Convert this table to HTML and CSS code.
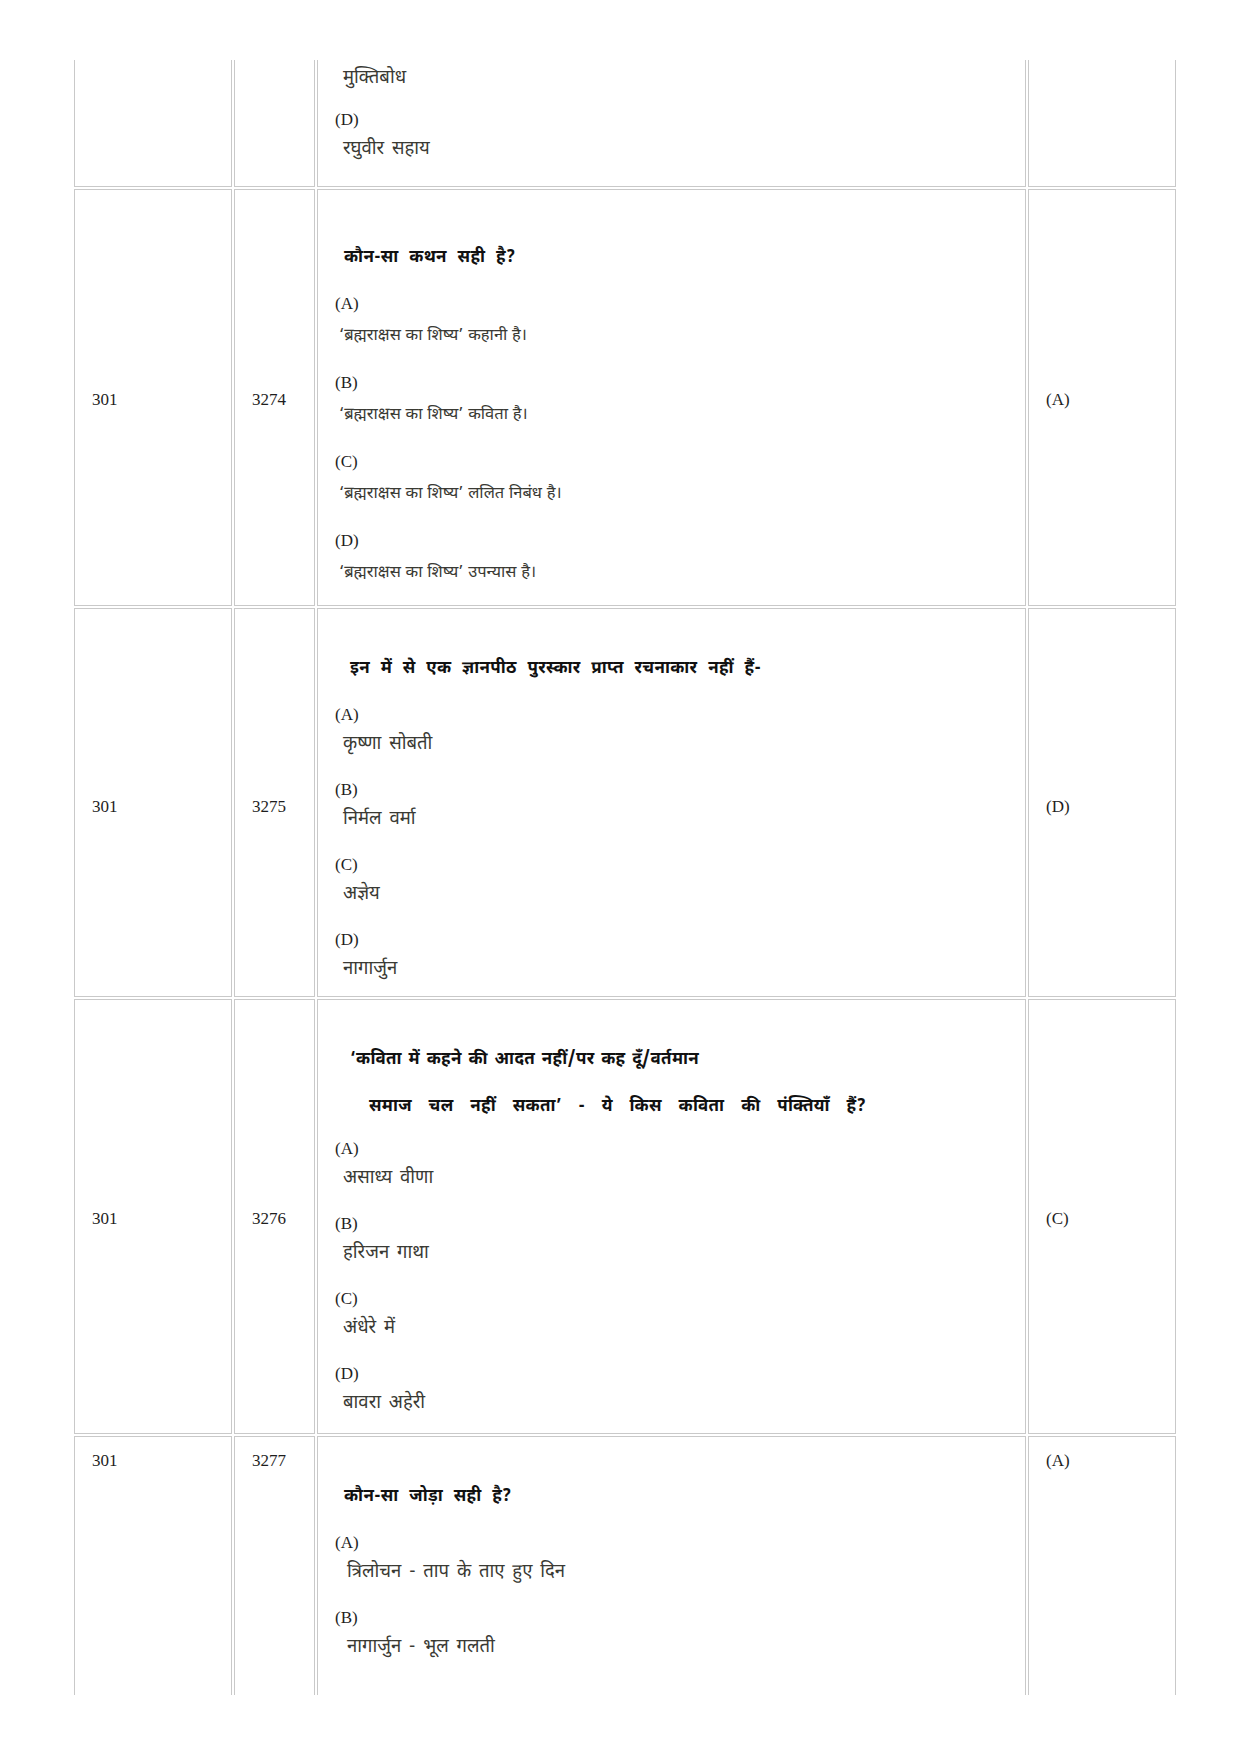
FILE: index.html
```html
<!DOCTYPE html>
<html lang="hi">
<head>
<meta charset="utf-8">
<title>प्रश्न तालिका</title>
<link rel="stylesheet" href="styles.css">
</head>
<body>
<div class="page">
  <table class="qtable">
    <tr class="row-first">
      <td class="c1"></td>
      <td class="c2"></td>
      <td class="c3">
        <div class="opt-text first">मुक्तिबोध</div>
        <div class="opt">
          <div class="opt-label">(D)</div>
          <div class="opt-text">रघुवीर सहाय</div>
        </div>
      </td>
      <td class="c4"></td>
    </tr>
    <tr class="tall">
      <td>301</td>
      <td>3274</td>
      <td class="c3">
        <div class="question">कौन-सा कथन सही है?</div>
        <div class="opt">
          <div class="opt-label">(A)</div>
          <div class="opt-text">‘ब्रह्मराक्षस का शिष्य’ कहानी है।</div>
        </div>
        <div class="opt">
          <div class="opt-label">(B)</div>
          <div class="opt-text">‘ब्रह्मराक्षस का शिष्य’ कविता है।</div>
        </div>
        <div class="opt">
          <div class="opt-label">(C)</div>
          <div class="opt-text">‘ब्रह्मराक्षस का शिष्य’ ललित निबंध है।</div>
        </div>
        <div class="opt">
          <div class="opt-label">(D)</div>
          <div class="opt-text">‘ब्रह्मराक्षस का शिष्य’ उपन्यास है।</div>
        </div>
      </td>
      <td>(A)</td>
    </tr>
    <tr>
      <td>301</td>
      <td>3275</td>
      <td class="c3">
        <div class="question q-wide">इन में से एक ज्ञानपीठ पुरस्कार प्राप्त रचनाकार नहीं हैं-</div>
        <div class="opt">
          <div class="opt-label">(A)</div>
          <div class="opt-text">कृष्णा सोबती</div>
        </div>
        <div class="opt">
          <div class="opt-label">(B)</div>
          <div class="opt-text">निर्मल वर्मा</div>
        </div>
        <div class="opt">
          <div class="opt-label">(C)</div>
          <div class="opt-text">अज्ञेय</div>
        </div>
        <div class="opt">
          <div class="opt-label">(D)</div>
          <div class="opt-text">नागार्जुन</div>
        </div>
      </td>
      <td>(D)</td>
    </tr>
    <tr class="two-line">
      <td>301</td>
      <td>3276</td>
      <td class="c3">
        <div class="question q-wide q-line1">‘कविता में कहने की आदत नहीं/पर कह दूँ/वर्तमान</div>
        <div class="question q-line2">समाज चल नहीं सकता’ - ये किस कविता की पंक्तियाँ हैं?</div>
        <div class="opt">
          <div class="opt-label">(A)</div>
          <div class="opt-text">असाध्य वीणा</div>
        </div>
        <div class="opt">
          <div class="opt-label">(B)</div>
          <div class="opt-text">हरिजन गाथा</div>
        </div>
        <div class="opt">
          <div class="opt-label">(C)</div>
          <div class="opt-text">अंधेरे में</div>
        </div>
        <div class="opt">
          <div class="opt-label">(D)</div>
          <div class="opt-text">बावरा अहेरी</div>
        </div>
      </td>
      <td>(C)</td>
    </tr>
    <tr class="row-last">
      <td>301</td>
      <td>3277</td>
      <td class="c3">
        <div class="question">कौन-सा जोड़ा सही है?</div>
        <div class="opt">
          <div class="opt-label">(A)</div>
          <div class="opt-text">त्रिलोचन - ताप के ताए हुए दिन</div>
        </div>
        <div class="opt">
          <div class="opt-label">(B)</div>
          <div class="opt-text">नागार्जुन - भूल गलती</div>
        </div>
      </td>
      <td>(A)</td>
    </tr>
  </table>
</div>
</body>
</html>
```

FILE: styles.css
```css
html, body {
  margin: 0;
  padding: 0;
  background: #ffffff;
}

body {
  font-family: "Liberation Serif", "Times New Roman", serif;
  font-size: 17px;
  color: #1e1e1e;
}

.page {
  width: 1240px;
  height: 1695px;
  padding-top: 58px;
  box-sizing: border-box;
  overflow: hidden;
}

.qtable {
  margin-left: 72px;
  width: 1106px;
  table-layout: fixed;
  border-collapse: separate;
  border-spacing: 2px;
}

.qtable td {
  box-sizing: border-box;
  border: 1px solid #c9c9c9;
  padding: 14px 10px 6px 17px;
  vertical-align: middle;
  line-height: 20px;
}

.qtable td.c1 { width: 158px; }
.qtable td.c2 { width: 81px; }
.qtable td.c3 { width: 709px; }
.qtable td.c4 { width: 148px; }

.row-first td {
  border-top: none;
  padding-top: 0;
  padding-bottom: 16px;
}

.row-last td {
  border-bottom: none;
  vertical-align: top;
  padding-bottom: 120px;
}

.question {
  font-family: "Noto Sans Devanagari", "Lohit Devanagari", "Noto Serif Devanagari", "Mangal", sans-serif;
  font-weight: 700;
  font-size: 17px;
  line-height: 30px;
  color: #111;
  padding-left: 9px;
  margin-top: 31px;
  margin-bottom: 21px;
  word-spacing: 6px;
  letter-spacing: 0.3px;
}

.q-wide {
  padding-left: 15px;
}

.q-line1 {
  margin-bottom: 17px;
  word-spacing: 2px;
}

.q-line2 {
  margin-top: 0;
  margin-bottom: 17px;
  padding-left: 34px;
  word-spacing: 12px;
}

.two-line td {
  padding-bottom: 9px;
}

.opt + .opt {
  margin-top: 15px;
}

.opt-label {
  line-height: 20px;
}

.opt-text {
  font-family: "Noto Sans Devanagari", "Lohit Devanagari", "Noto Serif Devanagari", "Mangal", sans-serif;
  font-size: 18.5px;
  line-height: 40px;
  color: #3a3a34;
  padding-left: 8px;
  word-spacing: 3px;
}

.opt-text.first {
  line-height: 38px;
  margin-bottom: 12px;
}

.tall td {
  padding-bottom: 10px;
}

.tall .question {
  margin-top: 39px;
}

.tall .opt-text {
  font-size: 16.5px;
  line-height: 44px;
  padding-left: 4px;
  word-spacing: 0.5px;
}

.row-last .opt-text {
  padding-left: 12px;
}
```
